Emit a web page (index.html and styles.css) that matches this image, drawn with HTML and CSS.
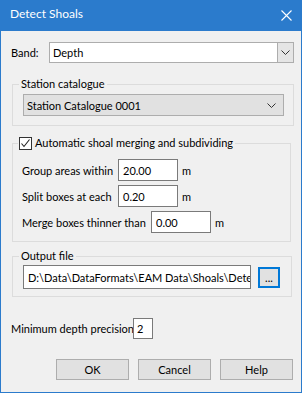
FILE: index.html
```html
<!DOCTYPE html>
<html>
<head>
<meta charset="utf-8">
<link rel="stylesheet" href="styles.css">
</head>
<body>
<div class="window">
  <div class="titlebar">
    <span class="title">Detect Shoals</span>
    <svg class="close" width="11" height="11" viewBox="0 0 11 11"><path d="M0.5 0.5 L10.5 10.5 M10.5 0.5 L0.5 10.5" stroke="#fff" stroke-width="1.1" fill="none"/></svg>
  </div>
  <div class="content">
    <div class="band-row">
      <span class="band-label">Band:</span>
      <div class="combo combo-white">
        <span class="combo-text">Depth</span>
        <span class="combo-btn"><svg width="9" height="5" viewBox="0 0 9 5"><path d="M0.5 0.5 L4.5 4.5 L8.5 0.5" stroke="#333" fill="none"/></svg></span>
      </div>
    </div>

    <fieldset class="group group-station">
      <legend>Station catalogue</legend>
      <div class="combo combo-grey">
        <span class="combo-text">Station Catalogue 0001</span>
        <svg class="chev" width="9" height="5" viewBox="0 0 9 5"><path d="M0.5 0.5 L4.5 4.5 L8.5 0.5" stroke="#333" fill="none"/></svg>
      </div>
    </fieldset>

    <fieldset class="group group-auto">
      <legend class="check-legend">
        <span class="checkbox"><svg width="11" height="11" viewBox="0 0 11 11"><path d="M1.5 5.5 L4 8.5 L9.5 1.5" stroke="#222" stroke-width="1.1" fill="none"/></svg></span>
        <span>Automatic shoal merging and subdividing</span>
      </legend>
      <div class="field-row">
        <span class="field-label w1">Group areas within</span>
        <span class="textbox tb-num">20.00</span>
        <span class="unit">m</span>
      </div>
      <div class="field-row">
        <span class="field-label w1">Split boxes at each</span>
        <span class="textbox tb-num">0.20</span>
        <span class="unit">m</span>
      </div>
      <div class="field-row">
        <span class="field-label w2">Merge boxes thinner than</span>
        <span class="textbox tb-num">0.00</span>
        <span class="unit">m</span>
      </div>
    </fieldset>

    <fieldset class="group group-output">
      <legend>Output file</legend>
      <div class="output-row">
        <span class="textbox tb-path">D:\Data\DataFormats\EAM Data\Shoals\DetectShoals.txt</span>
        <span class="browse">...</span>
      </div>
    </fieldset>

    <div class="precision-row">
      <span class="prec-label">Minimum depth precision</span>
      <span class="textbox tb-prec">2</span>
    </div>

    <div class="buttons">
      <span class="btn">OK</span>
      <span class="btn">Cancel</span>
      <span class="btn">Help</span>
    </div>
  </div>
</div>
</body>
</html>
```

FILE: styles.css
```css
* { box-sizing: border-box; }
html, body { margin: 0; padding: 0; background: #f0f0f0; }
body { font-family: "Lato", "Liberation Sans", sans-serif; font-size: 11px; color: #000; white-space: nowrap; }

.window {
  width: 302px;
  height: 393px;
  border: 1px solid #2b7bcc;
  border-top: none;
  background: #f0f0f0;
  display: flex;
  flex-direction: column;
  overflow: hidden;
}
.titlebar {
  flex-shrink: 0;
  height: 31px;
  margin: 0 -1px;
  background: #2b7bcc;
  display: flex;
  align-items: center;
  justify-content: space-between;
  padding: 0 10px 4px 10px;
}
.title { color: #fff; font-size: 12px; }
.close { margin-top: 3px; }

.content {
  display: flex;
  flex-direction: column;
  padding: 0 0 0 10px;
}

.band-row {
  display: flex;
  align-items: center;
  margin-top: 11px;
}
.band-label { width: 38px; }
.combo {
  display: flex;
  align-items: center;
}
.combo-white {
  width: 245px;
  height: 21px;
  background: #fff;
  border: 1px solid #adadad;
}
.combo-text { flex: 1; padding-left: 3px; }
.combo-btn {
  width: 16px;
  height: 100%;
  background: #e5e5e5;
  border-left: 1px solid #adadad;
  display: flex;
  align-items: center;
  justify-content: center;
}
.combo-grey {
  width: 261px;
  height: 22px;
  background: #e1e1e1;
  border: 1px solid #adadad;
}
.chev { margin-right: 7px; }

.group {
  margin: 0 0 0 1px;
  border: 1px solid #dcdcdc;
  min-width: 0;
}
.group legend {
  padding: 0 2px;
  margin-left: -4px;
  line-height: 16px;
  height: 16px;
}
.group-station {
  width: 282px;
  margin-top: 13px;
  padding: 2px 10px 9px 10px;
}
.group-auto {
  width: 279px;
  margin-top: 9px;
  padding: 8px 10px 8px 9px;
}
.group .check-legend {
  display: flex;
  align-items: center;
  margin-left: -4px;
  padding: 0 2px 0 1px;
}
.checkbox {
  width: 13px;
  height: 13px;
  border: 1px solid #333;
  background: #fff;
  display: inline-flex;
  align-items: center;
  justify-content: center;
  margin-right: 3px;
}
.field-row {
  display: flex;
  align-items: center;
  margin-bottom: 4px;
}
.field-row:last-child { margin-bottom: 0; }
.field-label.w1 { width: 96px; }
.field-label.w2 { width: 129px; }
.textbox {
  background: #fff;
  border: 1px solid #7a7a7a;
  height: 22px;
  display: flex;
  align-items: center;
  padding-left: 4px;
  overflow: hidden;
}
.tb-num { width: 60px; }
.unit { margin-left: 4px; }

.group-output {
  width: 280px;
  margin-top: 6px;
  padding: 1px 10px 7px 10px;
}
.output-row {
  display: flex;
  align-items: center;
}
.tb-path { width: 228px; height: 24px; }
.browse {
  width: 22px;
  height: 21px;
  margin-left: 7px;
  border: 2px solid #0078d7;
  background: #e1e1e1;
  display: flex;
  align-items: center;
  justify-content: center;
  line-height: 1;
}

.precision-row {
  display: flex;
  align-items: center;
  margin-top: 21px;
}
.prec-label { width: 122px; }
.tb-prec { width: 20px; height: 21px; padding-left: 3px; }

.buttons {
  display: flex;
  gap: 9px;
  margin-top: 20px;
  margin-left: 45px;
}
.btn {
  width: 73px;
  height: 21px;
  background: #e1e1e1;
  border: 1px solid #adadad;
  display: flex;
  align-items: center;
  justify-content: center;
}
```
